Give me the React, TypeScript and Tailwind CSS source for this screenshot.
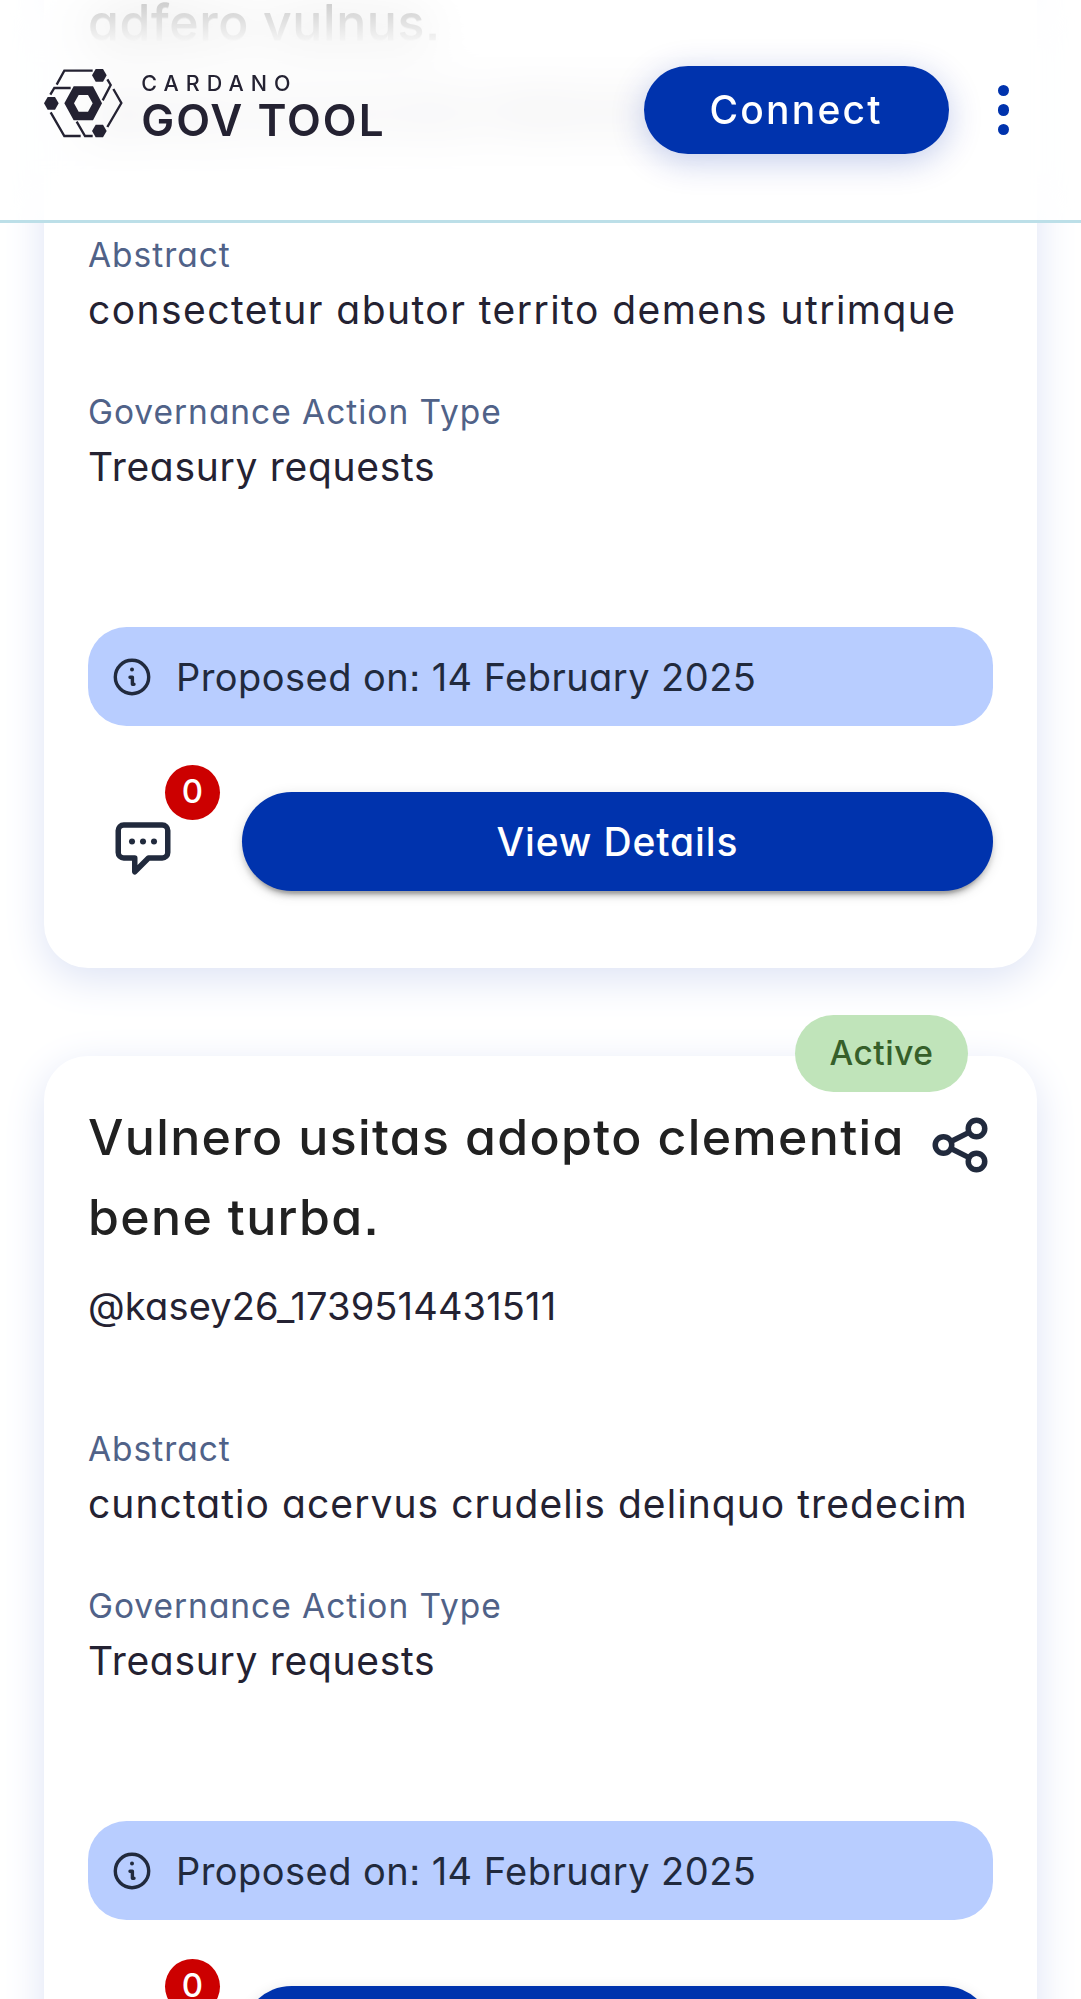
type Field = { label: string; value: string; valueClass: string };

type Proposal = {
  title: string;
  titleClass: string;
  handle: string;
  fields: Field[];
  date: string;
  comments: number;
};

const proposals: Proposal[] = [
  {
    title: "adfero vulnus.",
    titleClass: "tracking-[0.6px]",
    handle: "@kasey_hermann26_1739514431511",
    fields: [
      { label: "Abstract", value: "consectetur abutor territo demens utrimque", valueClass: "tracking-[1.45px]" },
      { label: "Governance Action Type", value: "Treasury requests", valueClass: "tracking-[0.7px]" },
    ],
    date: "14 February 2025",
    comments: 0,
  },
  {
    title: "Vulnero usitas adopto clementia bene turba.",
    titleClass: "tracking-[1.35px]",
    handle: "@kasey26_1739514431511",
    fields: [
      { label: "Abstract", value: "cunctatio acervus crudelis delinquo tredecim", valueClass: "tracking-[1.06px]" },
      { label: "Governance Action Type", value: "Treasury requests", valueClass: "tracking-[0.7px]" },
    ],
    date: "14 February 2025",
    comments: 0,
  },
];

function LogoMark() {
  return (
    <svg viewBox="42 57 236 206" className="h-[68.7px] w-[78.7px]" fill="none" stroke="#242232" strokeWidth="7">
      <path d="M80 104 103 62H188" />
      <path d="M232 88 242 105 218 151" />
      <path d="M250 117 274 159 232 231" />
      <path d="M62 187 103 258H152" />
      <path d="M140 215 165 258H188" />
      <path d="M61 134 73 114H122" />
      <g fill="#242232" stroke="none">
        <path d="M197 57h22l11 19-11 19h-22l-11-19Z" />
        <path d="M197 224h22l11 19-11 19h-22l-11-19Z" />
        <path d="M53 141h22l11 19-11 19H53l-11-19Z" />
        <path fillRule="evenodd" d="M131 109h58l27 51-27 51h-58l-28-51ZM146 135l-14 25 14 25h28l14-25-14-25Z" />
      </g>
    </svg>
  );
}

function ShareIcon() {
  return (
    <svg viewBox="0 0 24 24" className="mt-[14.5px] size-[66px] shrink-0" fill="none" stroke="#212a3d" strokeWidth="2">
      <circle cx="6" cy="12" r="3" />
      <circle cx="18" cy="6" r="3" />
      <circle cx="18" cy="18" r="3" />
      <path d="M8.7 10.7 15.3 7.4M8.7 13.3l6.6 3.3" />
    </svg>
  );
}

function CommentIcon() {
  return (
    <svg viewBox="0 0 24 24" className="size-[66px]" fill="none" stroke="#212a3d" strokeWidth="2" strokeLinejoin="round">
      <path d="M5 4h14a2 2 0 0 1 2 2v8a2 2 0 0 1-2 2h-5l-5 5v-5H5a2 2 0 0 1-2-2V6a2 2 0 0 1 2-2Z" />
      <g fill="#212a3d" stroke="none">
        <circle cx="8" cy="10" r="1.1" />
        <circle cx="12" cy="10" r="1.1" />
        <circle cx="16" cy="10" r="1.1" />
      </g>
    </svg>
  );
}

function InfoIcon() {
  return (
    <svg viewBox="0 0 44 44" className="size-[44px] shrink-0" fill="none" stroke="#212a3d" strokeWidth="3.4" strokeLinecap="round" strokeLinejoin="round">
      <circle cx="22" cy="22" r="16.7" />
      <path d="M20 22.3h2.4v7h1.6" />
      <circle cx="22" cy="14.6" r="2" fill="#212a3d" stroke="none" />
    </svg>
  );
}

function Header() {
  return (
    <header className="absolute inset-x-0 top-0 z-10 flex h-[223px] items-start border-b-[3px] border-[#bcdfe8] bg-white/78 pt-[66px] pr-[72px] pl-[44px] backdrop-blur-[26px]">
      <span
        aria-hidden="true"
        className="absolute -top-[18px] left-[88px] bg-linear-to-b from-[#cacaca] from-20% to-[#f3f3f3] to-72% bg-clip-text text-[50px] leading-[80px] font-medium tracking-[0.6px] text-transparent"
      >
        adfero vulnus.
      </span>
      <div className="mt-[3px] flex">
        <LogoMark />
        <div className="mt-[2px] ml-[18.5px] text-[#242232]">
          <p className="text-[21.5px] leading-[24px] font-medium tracking-[7px]">CARDANO</p>
          <p className="mt-[3px] text-[44px] leading-[44px] font-semibold tracking-[2px]">GOV TOOL</p>
        </div>
      </div>
      <button className="ml-auto h-[88px] w-[305px] rounded-full bg-[#0033ad] pt-[1px] text-[39px] font-medium tracking-[2.2px] text-white shadow-[0_7px_34px_rgba(0,40,173,0.24)]">
        Connect
      </button>
      <button className="mt-[19px] ml-[49px] flex flex-col gap-[8px]">
        <i className="size-[11.4px] rounded-full bg-[#0033ad]" />
        <i className="size-[11.4px] rounded-full bg-[#0033ad]" />
        <i className="size-[11.4px] rounded-full bg-[#0033ad]" />
      </button>
    </header>
  );
}

function ProposalCard({ p }: { p: Proposal }) {
  return (
    <article className="relative flex h-[1106px] shrink-0 flex-col rounded-[44px] bg-white px-[44px] pt-[41px] shadow-[0_11px_41px_#dde3f5]">
      <span className="absolute -top-[41px] right-[69px] flex h-[77px] w-[173px] items-center justify-center rounded-full bg-[#c0e4ba] text-[33.5px] font-medium tracking-[0.5px] text-[#365f2a]">
        Active
      </span>
      <div className="flex h-[160px] shrink-0">
        <h2 className={`flex-1 self-end pt-[1px] text-[50px] leading-[80px] font-medium text-[#212121] ${p.titleClass}`}>{p.title}</h2>
        <div className="h-[80px]">
          <ShareIcon />
        </div>
      </div>
      <p className="mt-[20px] mb-[37px] text-[38px] leading-[58px] tracking-[0.15px] text-[#242232]">{p.handle}</p>
      {p.fields.map((f) => (
        <div key={f.label} className="mb-[-5px] pt-[55px]">
          <p className="text-[33.5px] leading-[44px] tracking-[0.97px] text-[#506288]">{f.label}</p>
          <p className={`mt-[4px] mb-[1px] text-[39px] leading-[58px] whitespace-nowrap text-[#242232] ${f.valueClass}`}>{f.value}</p>
        </div>
      ))}
      <div className="mt-[135px] flex h-[99px] shrink-0 items-center gap-[22px] rounded-[38.5px] bg-[#b8cdff] pl-[22px] text-[38px] tracking-[0.45px] text-[#212a3d]">
        <InfoIcon />
        <span className="pt-[2px]">Proposed on: {p.date}</span>
      </div>
      <div className="mt-[66px] flex h-[99px] shrink-0 gap-[44px]">
        <button className="relative flex w-[110px] justify-center pt-[22px]">
          <CommentIcon />
          <span className="absolute -top-[27px] left-[77px] flex size-[55px] items-center justify-center rounded-full bg-[#cc0000] pb-[1px] text-[33px] font-medium text-white">
            {p.comments}
          </span>
        </button>
        <button className="flex-1 rounded-full bg-[#0033ad] pt-[2px] text-[39px] font-medium tracking-[0.9px] text-white shadow-[0_8px_3px_-5px_rgba(0,0,0,0.2),0_5.5px_5.5px_rgba(0,0,0,0.14),0_3px_14px_rgba(0,0,0,0.12)]">
          View Details
        </button>
      </div>
    </article>
  );
}

export default function App() {
  return (
    <div className="relative h-[1999px] w-[1081px] overflow-hidden bg-white font-['Inter','Noto_Sans',sans-serif] [font-feature-settings:'cv11','ss07','ss03']">
      <Header />
      <main className="-mt-[138px] flex flex-col gap-[88px] px-[44px]">
        {proposals.map((p) => (
          <ProposalCard key={p.title} p={p} />
        ))}
      </main>
    </div>
  );
}
